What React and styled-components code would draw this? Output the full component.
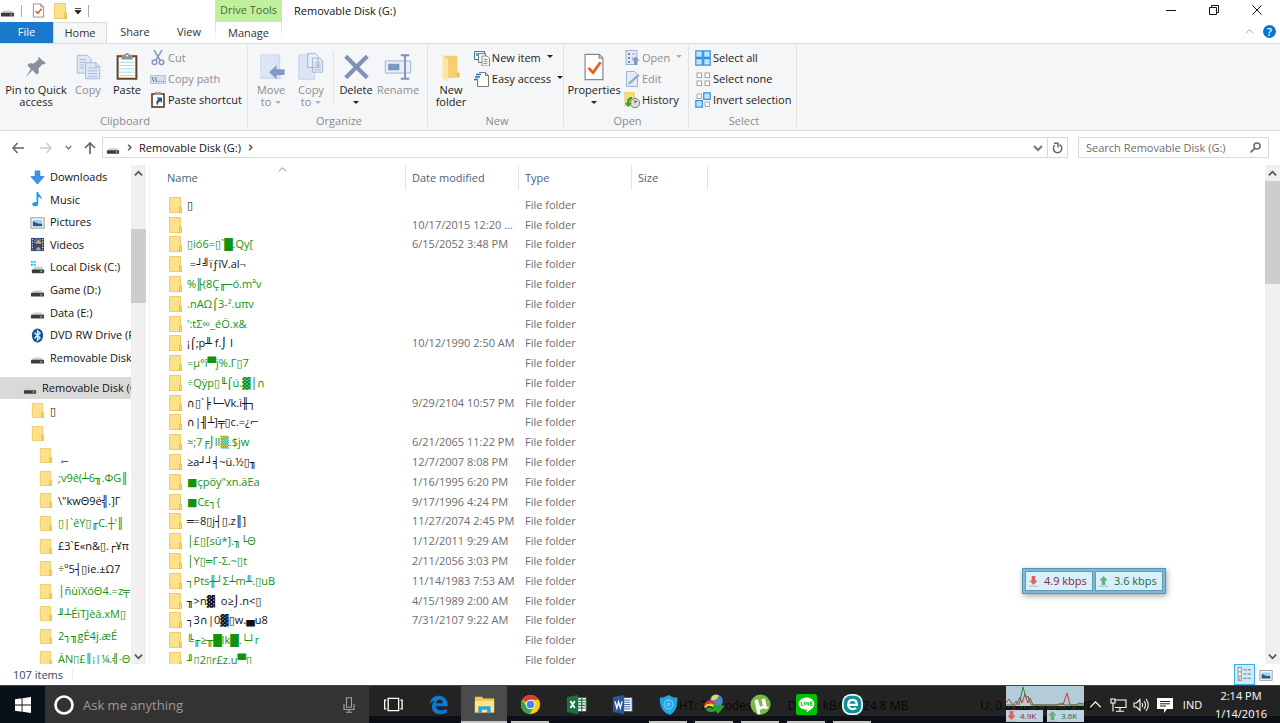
import styled, { createGlobalStyle } from 'styled-components'

const files = [
  ['▯', ''],
  ['', '10/17/2015 12:20 ...'],
  ['▯ió6=▯`█.Qy[', '6/15/2052 3:48 PM', 1],
  [' =┘╝ïƒîV.al¬', ''],
  ['%╟(8Ç╓─ó.mªv', '', 1],
  ['.nAΩ⌠3-².uπv', '', 1],
  ["':tΣ∞_éÖ.x&", '', 1],
  ['¡⌠;p╨ f.⌡ I', '10/12/1990 2:50 AM'],
  ['=µ°î▀j%.Γ▯7', '', 1],
  ['÷Qÿp▯╙⌠ú.▓│∩', '', 1],
  ['∩▯`╞└─Vk.ì╫┐', '9/29/2104 10:57 PM'],
  ['∩|╢┴]╤▯c.=¿⌐', ''],
  ['≈;7╒⌡ll▒.$jw', '6/21/2065 11:22 PM', 1],
  ['≥a┘┘╡~ü.½▯╖', '12/7/2007 8:08 PM'],
  ['■çpöy"xn.äEa', '1/16/1995 6:20 PM', 1],
  ['■Cε┐{', '9/17/1996 4:24 PM', 1],
  ['═=8▯j┤▯.z║]', '11/27/2074 2:45 PM'],
  ['│£▯[sû*].╖└Θ', '1/12/2011 9:29 AM', 1],
  ['│Y▯═Γ-Σ.~▯t', '2/11/2056 3:03 PM', 1],
  ['┐Pts╫┘Σ┴m╨.▯uB', '11/14/1983 7:53 AM', 1],
  ['╖>n▓  o≥⌡.n<▯', '4/15/1989 2:00 AM'],
  ['┐3∩|0▓▯w.▄u8', '7/31/2107 9:22 AM'],
  ['╚╓≥╥█lk█.└┘r', '', 1],
  ['╜▯2▯r£z.u▀▯', '', 1],
]

const places = [
  ['download', 'Downloads'],
  ['music', 'Music'],
  ['picture', 'Pictures'],
  ['video', 'Videos'],
  ['windrive', 'Local Disk (C:)'],
  ['drive', 'Game (D:)'],
  ['drive', 'Data (E:)'],
  ['bluetooth', 'DVD RW Drive (F:)'],
  ['drive', 'Removable Disk'],
]

const branches = [
  ['▯', 30],
  ['', 30],
  [' ¸_', 38],
  [';v9ê(┴6╖.ΦG║', 38, 1],
  ['\\"kwΘ9ë╣.]Γ', 38],
  ['▯|`êY▯╓C.┼\'║', 38, 1],
  ['£3`E«n&▯.┌¥π', 38],
  ['÷º5┤▯ie.±Ω7', 38],
  ['│ñùïXóΘ4.=z╤', 38, 1],
  ['╜┴ÉïTJèâ.xM▯', 38, 1],
  ['2┐╖gÉ4j.æÉ', 38, 1],
  ['ÄN▯£║¡|¼.╣·Θ', 38, 1],
]

const icons = {
  drive: (
    <>
      <path d="M4 8h8l3 3H1z" fill="#d2d2d2" />
      <rect x="1" y="10.500" width="14" height="4" rx="1" fill="#3c3c3c" />
      <rect x="11" y="11.500" width="2" height="2" fill="#3fd43f" />
    </>
  ),
  windrive: (
    <>
      <path d="M1 1h2v2H1zM4 1h2v2H4zM1 4h2v2H1zM4 4h2v2H4z" fill="#1cb4ee" />
      <path d="M5 7h8l2 4H2z" fill="#d2d2d2" />
      <rect x="2" y="10" width="13" height="4" rx="1" fill="#3c3c3c" />
      <rect x="11" y="11" width="2" height="2" fill="#3fd43f" />
    </>
  ),
  folder: (
    <>
      <path d="M2.500.500h11V12l1 3.500h-12z" fill="#fde08a" stroke="#eecb68" strokeWidth="1" />
      <path d="M12.500 10h2v5.500h-2z" fill="#fbd768" stroke="#dfb94e" strokeWidth=".8" />
    </>
  ),
  download: (
    <path d="M5.500 1h5v6H15l-7 8-7-8h4.500z" fill="#3c94e3" stroke="#2478c5" strokeWidth=".8" />
  ),
  music: (
    <>
      <ellipse cx="5.500" cy="13" rx="3" ry="2.300" fill="#1a9df0" />
      <path d="M7 0h1.800c0 3 4.200 4 3.700 8.500-.8-2.200-2-3-3.700-3.200V13H7z" fill="#1a9df0" />
    </>
  ),
  picture: (
    <>
      <rect x="1" y="3" width="14" height="11" fill="#fff" stroke="#8d8d8d" />
      <path d="M3 5h10v7H3z" fill="#9fd0f3" />
      <path d="M3 7c3 0 4 3 10 2v3H3z" fill="#2c5c7b" />
    </>
  ),
  video: (
    <>
      <path d="M1 1h14v14H1z" fill="#37393d" />
      <path d="M4 1.500h8v6H4z" fill="#3d72c9" />
      <path d="M4 8.500h8v6H4z" fill="#2d4f9b" />
      <path d="M6 7l3-4 3 3v1.500zM6 14l3-4 3 4z" fill="#e5a336" />
      <path d="M2.500 2v12M13.500 2v12" stroke="#e5e5e5" strokeWidth="1.300" strokeDasharray="1.500 1.300" />
    </>
  ),
  bluetooth: (
    <>
      <ellipse cx="8" cy="8" rx="6" ry="7.500" fill="#13539f" />
      <path d="M4.800 5l6 5.500L8 13V3l2.800 2.500-6 5.500" fill="none" stroke="#fff" strokeWidth="1.300" />
    </>
  ),
  check: (
    <>
      <path d="M2.500 1h8l3 3v11h-11z" fill="#fff" stroke="#8b8b8b" />
      <path d="M10.500 1v3h3" fill="none" stroke="#8b8b8b" />
      <path d="M5 8.500L7.300 11l4-5" fill="none" stroke="#f0561d" strokeWidth="1.600" />
    </>
  ),
  cut: (
    <g fill="none" stroke="#8799b8" strokeWidth="1.500">
      <path d="M4 0l6 10M12 0L6 10" />
      <circle cx="4.500" cy="12.300" r="2.300" />
      <circle cx="11.500" cy="12.300" r="2.300" />
    </g>
  ),
  path: (
    <>
      <rect x=".5" y="4.500" width="15" height="8" fill="#d2def0" stroke="#b4c5e0" />
      <path d="M2 6l2 5M5 6l2 5M8.500 10.500h1M11 10.500h1M13 10.500h1" stroke="#5873a0" fill="none" />
    </>
  ),
  shortcut: (
    <>
      <rect x="2" y="2" width="12" height="13" fill="#fff" stroke="#65452e" strokeWidth="1.700" />
      <rect x="5" y="0" width="6" height="3" fill="#9b9b9b" />
      <path d="M6.500 5.500H12V11l-1.800-1.800C8.300 10.500 7.500 11.500 7.500 13.500 5.500 11.500 6.300 8.800 8.300 7.300z" fill="#20589b" />
    </>
  ),
  newitem: (
    <>
      <path d="M.5 1.500h10v8H.5z" fill="#fff" stroke="#317eb2" />
      <path d="M2 3h7v3H2z" fill="#68a9cf" />
      <path d="M4.500 3.500h7v9h-7z" fill="#f7f7f7" stroke="#777" />
      <path d="M8 6h5l2.500 2.500V16H8z" fill="#fff" stroke="#888" />
      <path d="M9.500 9.500h4M9.500 11.500h4M9.500 13.500h4" stroke="#7c9fd0" />
      <path d="M11.500 8v7" stroke="#df8c8c" strokeWidth=".6" />
    </>
  ),
  easy: (
    <>
      <path d="M5 1.500h6.500l3 3v11H3.500V9" fill="#fff" stroke="#777" />
      <path d="M11.500 1.500v3h3" fill="none" stroke="#777" />
      <path d="M2 3.500h5M1 6h5M0 8.500h4" stroke="#2672b5" strokeWidth="1.300" />
    </>
  ),
  open: (
    <>
      <rect x="2" y=".5" width="11" height="14" fill="#e3eaf6" stroke="#a1b2d1" />
      <path d="M4 3h2v2H4zM4 7h2v2H4zM4 11h2v2H4z" fill="#7389b5" />
      <path d="M8 4h3M8 8h2" stroke="#8ea2c7" />
      <path d="M11.500 6.500l4 4h-2.300V15H10v-4.500H7.700z" fill="#8598c0" />
    </>
  ),
  edit: (
    <>
      <path d="M2.500.5h8l3 3v12h-11z" fill="#e3ebf8" stroke="#a1b2d1" />
      <path d="M4 14l1-3 9-8 1.500 1.700-9 8z" fill="#94a9ce" />
    </>
  ),
  history: (
    <>
      <path d="M1 0h9l1 14H1z" fill="#fbdc6f" stroke="#dfb94e" strokeWidth=".7" />
      <circle cx="11" cy="11" r="4.700" fill="#ddd" stroke="#777" />
      <path d="M11 8v3l2-2" stroke="#555" fill="none" />
      <path d="M8 5v2c-2 .5-2.600 2-2.600 4H8l-4 4-3-4h2c0-4 1.500-6 5-6z" fill="#20b22c" />
    </>
  ),
  all: (
    <g fill="#bfe4fc" stroke="#2a93e0" strokeWidth="1.200">
      <path d="M.8.8h6.500v6.500H.8zM8.700.8h6.500v6.500H8.700zM.8 8.700h6.500v6.500H.8zM8.700 8.700h6.500v6.500H8.700z" />
    </g>
  ),
  none: (
    <g fill="#fff" stroke="#a6a6a6" strokeWidth="1.100">
      <path d="M2 2h4.500v4.500H2zM10 2h4.500v4.500H10zM2 10h4.500v4.500H2zM10 10h4.500v4.500H10z" />
    </g>
  ),
  invert: (
    <>
      <path d="M2 2h4.500v4.500H2zM10 10h4.500v4.500H10z" fill="#fff" stroke="#a6a6a6" />
      <path d="M8.700.8h6.500v6.500H8.700zM.8 8.700h6.500v6.500H.8z" fill="#bfe4fc" stroke="#2a93e0" strokeWidth="1.200" />
    </>
  ),
  details: (
    <>
      <path d="M2 1.500h3v12H2zM2 5.500h3M2 9.500h3" fill="#fff" stroke="#9a9a9a" />
      <path d="M7 3.500h3M11 3.500h3M7 7.500h3M11 7.500h3M7 11.500h3M11 11.500h3" stroke="#6c7f8c" />
      <path d="M3 11h1v2H3z" fill="#d66" />
    </>
  ),
}

function Icon({ name, size = 16 }) {
  return (
    <svg width={size} height={size} viewBox="0 0 16 16" aria-hidden="true">
      {icons[name]}
    </svg>
  )
}

function Chevron({ dir = 'down', color = '#555', size = 9, weight = 2 }) {
  const d = {
    down: 'M1 3l4 4 4-4',
    up: 'M1 7l4-4 4 4',
    right: 'M3 1l4 4-4 4',
  }[dir]
  return (
    <svg width={size} height={size} viewBox="0 0 10 10" aria-hidden="true">
      <path d={d} fill="none" stroke={color} strokeWidth={weight} />
    </svg>
  )
}

const bigIcons = {
  pin: <path d="M18.500 5l8 7-2.300 1.300-1-.4-4.500 4.500.4 5-2.500 1.600-4.300-4.600L5 27l5.500-9L6.700 14l2-2 5 .3 4.800-4.300z" fill="#87919c" />,
  copy: (
    <g fill="#dfe8f5" stroke="#a6b8d6">
      <path d="M4.500 3.500h11l4 4v15h-15z" />
      <path d="M7 8h7M7 11h8M7 14h5M7 17h5" />
      <path d="M13.500 11.500h11l4 4v13h-15zM24.500 11.500v4h4" />
      <path d="M16 17h10M16 20h10M16 23h10M16 26h10" />
    </g>
  ),
  paste: (
    <>
      <rect x="6" y="4.500" width="20" height="24" fill="#fff" stroke="#65452e" strokeWidth="2.200" />
      <path d="M8 11h16M8 14.500h16M8 18h16M8 21.500h16M8 25h16" stroke="#a9d2ea" />
      <path d="M10 3h3.500a2.600 2.600 0 015 0H22v5H10z" fill="#8e9193" />
      <circle cx="16" cy="4" r="1" fill="#fff" />
    </>
  ),
  move: (
    <>
      <path d="M5 3h21v22l2 4H5z" fill="#dce5f3" />
      <path d="M5 3h20v25H5z" fill="none" stroke="#c2d0e7" strokeWidth=".7" />
      <path d="M14 21.500l8-7.500v4.500h8.500v6H22V29z" fill="#8499bf" />
    </>
  ),
  copyto: (
    <>
      <path d="M3 3h17v26H3z" fill="#dce5f3" stroke="#c2d0e7" />
      <g fill="#e8eef8" stroke="#9eb1d1">
        <path d="M12.500 1.500h8l3 3v12h-11zM17.500 6.500h8l3 3v12h-11z" />
        <path d="M19.500 11.500h7M19.500 14h7M19.500 16.500h7M19.500 19h7" />
      </g>
    </>
  ),
  delete: <path d="M5 4.500l23 23M28 4.500l-23 23" stroke="#8092b5" strokeWidth="4.500" fill="none" />,
  rename: (
    <>
      <path d="M2.500 9.500h27v13h-27z" fill="#e8eff9" stroke="#9eb1d1" />
      <path d="M5.500 12.500h12v7h-12z" fill="#7f96c2" />
      <path d="M19 3.500h4.500v25H19M28 3.500h-4.500v25H28" fill="none" stroke="#8094b9" strokeWidth="2" />
    </>
  ),
  newfolder: (
    <>
      <path d="M7 4h16v19h2v4l-14 1z" fill="#f4cf6c" />
      <path d="M7 3l6 5v20l-1.500 3L7 28z" fill="#fde59c" />
      <path d="M22 22h3v5h-3z" fill="#f0c04f" />
    </>
  ),
  properties: (
    <>
      <path d="M6.500 2.500h15l4 4v23h-19z" fill="#fff" stroke="#888" strokeWidth="1.300" />
      <path d="M21.500 2.500v4h4" fill="none" stroke="#888" strokeWidth="1.300" />
      <path d="M10 17l5 5 8-11" fill="none" stroke="#ee5a1c" strokeWidth="2.800" />
    </>
  ),
}

function Big({ icon, width, lines, off, arrow }) {
  return (
    <BigButton $width={width} $off={off}>
      <svg width="30" height="30" viewBox="0 0 32 32" aria-hidden="true">
        {bigIcons[icon]}
      </svg>
      {lines.map((line, i) => (
        <span key={line}>
          {line}
          {arrow && i > 0 && <Caret $off={off} />}
        </span>
      ))}
      {arrow && lines.length === 1 && (
        <span>
          <Caret $off={off} $alone />
        </span>
      )}
    </BigButton>
  )
}

function Small({ icon, children, off, arrow }) {
  return (
    <SmallButton $off={off}>
      <Icon name={icon} />
      {children}
      {arrow && <Caret $off={off} />}
    </SmallButton>
  )
}

function Ribbon() {
  return (
    <RibbonBar>
      <Group $width={248}>
        <Tools>
          <Big icon="pin" width={66} lines={['Pin to Quick', 'access']} />
          <Big icon="copy" width={38} lines={['Copy']} off />
          <Big icon="paste" width={40} lines={['Paste']} />
          <SmallColumn>
            <Small icon="cut" off>Cut</Small>
            <Small icon="path" off>Copy path</Small>
            <Small icon="shortcut">Paste shortcut</Small>
          </SmallColumn>
        </Tools>
        <GroupName>Clipboard</GroupName>
      </Group>
      <Group $width={180}>
        <Tools>
          <Big icon="move" width={40} lines={['Move', 'to']} off arrow />
          <Big icon="copyto" width={40} lines={['Copy', 'to']} off arrow />
          <ToolRule />
          <Big icon="delete" width={40} lines={['Delete']} arrow />
          <Big icon="rename" width={44} lines={['Rename']} off />
        </Tools>
        <GroupName>Organize</GroupName>
      </Group>
      <Group $width={136}>
        <Tools>
          <Big icon="newfolder" width={40} lines={['New', 'folder']} />
          <SmallColumn>
            <Small icon="newitem" arrow>New item</Small>
            <Small icon="easy" arrow>Easy access</Small>
          </SmallColumn>
        </Tools>
        <GroupName>New</GroupName>
      </Group>
      <Group $width={125}>
        <Tools>
          <Big icon="properties" width={54} lines={['Properties']} arrow />
          <SmallColumn>
            <Small icon="open" off arrow>Open</Small>
            <Small icon="edit" off>Edit</Small>
            <Small icon="history">History</Small>
          </SmallColumn>
        </Tools>
        <GroupName>Open</GroupName>
      </Group>
      <Group $width={108}>
        <Tools>
          <SmallColumn>
            <Small icon="all">Select all</Small>
            <Small icon="none">Select none</Small>
            <Small icon="invert">Invert selection</Small>
          </SmallColumn>
        </Tools>
        <GroupName>Select</GroupName>
      </Group>
    </RibbonBar>
  )
}

function ScrollBar({ before, thumb, after }) {
  return (
    <Track>
      <ScrollButton aria-label="Scroll up">
        <Chevron dir="up" />
      </ScrollButton>
      <Rail $before={before} $thumb={thumb} $after={after}>
        <i />
        <Thumb />
        <i />
      </Rail>
      <ScrollButton aria-label="Scroll down">
        <Chevron />
      </ScrollButton>
    </Track>
  )
}

const apps = [
  {
    name: 'Task View',
    art: <path d="M7 5h12v14H7zM5 7H3v10h2M21 7h2v10h-2" fill="none" stroke="#fff" strokeWidth="1.500" />,
  },
  {
    name: 'Edge',
    art: <path d="M2 11.500C3 5 7 2 12.500 2 19 2 23 7 22.600 14H9c.3 3 2.500 4.500 6 4.500 2.500 0 4.500-.6 6.500-1.700v4.400c-2 1.200-4.500 1.800-7.500 1.800-6 0-9.500-3.500-9.500-8.500 0-3 1.600-5.600 4.300-7C6 8 4 9 2 11.500zM9.200 10.500h7.600c0-2.500-1.300-3.800-3.600-3.800-2.200 0-3.600 1.400-4 3.800z" fill="#0b79d8" />,
  },
  {
    name: 'File Explorer',
    state: 'active',
    art: (
      <>
        <path d="M1 3h8l2 2h12v16H1z" fill="#f5c84b" />
        <path d="M1 8h22v13H1z" fill="#fde38f" />
        <path d="M5 14h14v8h-4v-4H9v4H5z" fill="#2ba5df" />
      </>
    ),
  },
  {
    name: 'Chrome',
    state: 'open',
    art: (
      <>
        <circle cx="12" cy="12" r="11" fill="#fc0" />
        <path d="M12 12L2.500 6.500A11 11 0 0121.500 6.500H12z" fill="#e33b2e" />
        <path d="M2.500 6.500A11 11 0 0011 23l5-8.500-8.500-.5z" fill="#37a34a" />
        <circle cx="12" cy="12" r="5.500" fill="#fff" />
        <circle cx="12" cy="12" r="4.300" fill="#4484ee" />
      </>
    ),
  },
  {
    name: 'Excel',
    art: (
      <>
        <path d="M13 4h10v16H13z" fill="#fff" stroke="#1e7044" strokeWidth="1" />
        <path d="M14 7h8M14 10h8M14 13h8M14 16h8M18 4v16" stroke="#1e7044" strokeWidth="1.300" />
        <path d="M1 3.500L14 1v22L1 20.500z" fill="#1e7044" />
        <path d="M5 8l5 8M10 8l-5 8" stroke="#fff" strokeWidth="2" />
      </>
    ),
  },
  {
    name: 'Word',
    art: (
      <>
        <path d="M13 4h10v16H13z" fill="#fff" stroke="#2b579a" strokeWidth="1" />
        <path d="M14 7h7M14 9.500h7M14 12h7M14 14.500h7M14 17h7" stroke="#2b579a" />
        <path d="M1 3.500L14 1v22L1 20.500z" fill="#2b579a" />
        <path d="M3.500 8.500L5.500 16l2-7 2 7 2-7.500" fill="none" stroke="#fff" strokeWidth="1.500" />
      </>
    ),
  },
  {
    name: 'Shield',
    state: 'open',
    art: (
      <>
        <path d="M12 1c4 2.500 7 3 10 3 .5 10-1 15-8 20C6 22 1.500 14 2 4c3 0 6-.5 10-3z" fill="#21a5e6" />
        <circle cx="12" cy="12" r="5" fill="none" stroke="#80cff4" strokeWidth="1.200" />
        <circle cx="12" cy="12" r="1.500" fill="none" stroke="#b8e5fa" />
      </>
    ),
  },
  {
    name: 'Download Manager',
    state: 'open',
    art: (
      <>
        <circle cx="14" cy="8" r="7.500" fill="#4a87c9" />
        <path d="M9 3c2-2.500 6-2.500 8-1l-2 3-3 2-4 0z" fill="#e4d75a" />
        <path d="M0 14C1 6.500 8 6 13 10l-2 2C7 9.500 4 10 0 14z" fill="#df342d" />
        <path d="M0 15c3-5 8-5 12-2l-2 2c-3-2-6-2-8 1z" fill="#ffd324" />
        <path d="M2 18c2-3.500 6-3 8.500-1L11 12l13 1.500-8 9-2.500-3C9 21.500 5 21 2 18z" fill="#23a52d" />
      </>
    ),
  },
  {
    name: 'uTorrent',
    state: 'open',
    art: (
      <>
        <circle cx="12" cy="12" r="11.500" fill="#78b943" />
        <path d="M5 7l4-1 2 7c.6 2 4 1.500 3.400-1L13 6l4-.8 2.200 9.300 2-.2c-.5 2-2 3-3.700 3-1 0-1.500-.5-2-1.300-1 1.500-3 2-4.500 1.300L12 23l-3.500.5z" fill="#fff" />
      </>
    ),
  },
  {
    name: 'LINE',
    state: 'open',
    art: (
      <>
        <rect x="0" y="0" width="24" height="24" rx="3" fill="#00c300" />
        <path d="M12 4c5 0 9 3 9 7.500 0 4-4 6.500-9 9.500l.5-3C7 18 3 15.500 3 11.500S7 4 12 4z" fill="#fff" />
        <path d="M6 9v4h2M9.500 9v4M11.500 13V9l3 4V9M19 9h-2.500v4H19M16.500 11h2" fill="none" stroke="#00b300" strokeWidth="1" />
      </>
    ),
  },
  {
    name: 'Smadav',
    state: 'open',
    art: (
      <>
        <rect x="0" y="0" width="24" height="24" rx="10" fill="#eef8f9" />
        <rect x="2" y="2" width="20" height="20" rx="8" fill="#118f98" />
        <path d="M7 12.500h10c0-4-2-5.700-4.800-5.700-3 0-5 2.200-5 5.400 0 4.800 5 6.300 9 4" fill="none" stroke="#fff" strokeWidth="2.500" />
      </>
    ),
  },
]

function Taskbar() {
  return (
    <TaskRow>
      <Ghost>
        <span>DHT: 77 nodes</span>
        <span>D: 0.0 kB/s T: 24.8 MB</span>
        <span>U: 0.0 kB/s T: 2.0 MB</span>
      </Ghost>
      <StartButton aria-label="Start">
        <svg width="16" height="16" viewBox="0 0 16 16">
          <path d="M0 2.200L6.600 1.300v6.200H0zM7.500 1.200L16 0v7.500H7.500zM0 8.400h6.600v6.300L0 13.800zM7.500 8.400H16V16l-8.500-1.200z" fill="#fff" />
        </svg>
      </StartButton>
      <Cortana>
        <svg width="22" height="22" viewBox="0 0 22 22" aria-hidden="true">
          <circle cx="11" cy="11" r="8.500" fill="none" stroke="#fff" strokeWidth="2.600" />
        </svg>
        <CortanaInput aria-label="Ask me anything" placeholder="Ask me anything" />
        <svg width="12" height="16" viewBox="0 0 12 16" aria-hidden="true">
          <path d="M3.500.7h5v9.600h-5zM1 7v5.500h10V7M6 12.500V15M3 15.300h6" fill="none" stroke="#a2a2a2" strokeWidth="1.100" />
        </svg>
      </Cortana>
      <Apps>
        {apps.map((app) => (
          <AppButton key={app.name} aria-label={app.name} $state={app.state}>
            <svg width="21" height="21" viewBox="0 0 24 24">
              {app.art}
            </svg>
          </AppButton>
        ))}
      </Apps>
      <Tray>
        <NetMeter>
          <svg width="78" height="20" viewBox="0 0 78 20" aria-hidden="true">
            <path d="M0 17l3-4 4 6h3l4-8 2 6 3-9 3 9 2-5 3 7h24l2-1 4 1 4-12 3 12h6l3-2 5 1" fill="none" stroke="#c73a35" />
            <path d="M0 19h7l3-4 3 4 4-18 3 11 2-2 3 9h27l4-2 3 2h19" fill="none" stroke="#33834a" />
          </svg>
          <MeterRow>
            <Meter $color="#8c2540"><SpeedArrow />4.9K</Meter>
            <Meter $color="#1d6b3f"><SpeedArrow up />3.6K</Meter>
          </MeterRow>
        </NetMeter>
        <TrayButton aria-label="Show hidden icons">
          <Chevron dir="up" color="#fff" size={13} weight={1} />
        </TrayButton>
        <TrayButton aria-label="Network">
          <svg width="17" height="16" viewBox="0 0 17 16">
            <path d="M5 3h11v7.500H5M10 10.500V14M6 14.300h8M1 2h4v4H1zM3 6v8.500" fill="none" stroke="#fff" strokeWidth="1.100" />
          </svg>
        </TrayButton>
        <TrayButton aria-label="Volume">
          <svg width="17" height="16" viewBox="0 0 17 16">
            <path d="M1 6h2.500L7 2.500v11L3.500 10H1zM9 6q1.300 2 0 4M11 4q3 4 0 8M13 2q4.500 6 0 12" fill="none" stroke="#fff" strokeWidth="1.100" />
          </svg>
        </TrayButton>
        <TrayButton aria-label="Notifications">
          <svg width="16" height="16" viewBox="0 0 16 16">
            <path d="M0 1h16v11h-6l-3 4v-4H0z" fill="#fff" />
            <path d="M3 4.500h10M3 6.800h10M3 9h6" stroke="#222" />
          </svg>
        </TrayButton>
        <Language>IND</Language>
        <Clock>
          <span>2:14 PM</span>
          <span>1/14/2016</span>
        </Clock>
      </Tray>
    </TaskRow>
  )
}

function SpeedArrow({ up }) {
  return (
    <svg width="9" height="11" viewBox="0 0 10 12" aria-hidden="true">
      {up ? (
        <path d="M5 0l4.500 5H7v5H3V5H.5z" fill="#64b078" />
      ) : (
        <path d="M3 0h4v5h2.500L5 10 .5 5H3z" fill="#e0605c" />
      )}
      <path d="M0 11.300h10" stroke="#9fb5bd" />
    </svg>
  )
}

export default function App() {
  return (
    <Page>
      <Global />
      <Top>
        <Quick>
          <TitleRow>
            <Icon name="drive" size={15} />
            <QuickRule />
            <IconButton aria-label="Properties"><Icon name="check" size={15} /></IconButton>
            <IconButton aria-label="New folder"><Icon name="folder" /></IconButton>
            <IconButton aria-label="Customize toolbar">
              <svg width="8" height="8" viewBox="0 0 8 8">
                <path d="M1 1.500h6M1 3.500h6L4 7z" stroke="#222" fill="#222" strokeWidth=".8" />
              </svg>
            </IconButton>
            <QuickRule />
          </TitleRow>
          <Tabs>
            <FileTab>File</FileTab>
            <Tab $width={54} $active>Home</Tab>
            <Tab $width={56}>Share</Tab>
            <Tab $width={52}>View</Tab>
          </Tabs>
        </Quick>
        <DriveTools>
          <DriveLabel>Drive Tools</DriveLabel>
          <ManageTab>Manage</ManageTab>
        </DriveTools>
        <Title>Removable Disk (G:)</Title>
        <WindowSide>
          <WindowButtons>
            <IconButton aria-label="Minimize">
              <svg width="10" height="10" viewBox="0 0 10 10"><path d="M0 5.500h10" stroke="#111" /></svg>
            </IconButton>
            <IconButton aria-label="Restore">
              <svg width="10" height="10" viewBox="0 0 10 10"><path d="M.5 2.500h7v7h-7zM2.500 2.500v-2h7v7h-2" fill="none" stroke="#111" /></svg>
            </IconButton>
            <IconButton aria-label="Close">
              <svg width="10" height="10" viewBox="0 0 10 10"><path d="M.5.5l9 9M9.500.5l-9 9" stroke="#111" /></svg>
            </IconButton>
          </WindowButtons>
          <HelpRow>
            <IconButton aria-label="Collapse ribbon"><Chevron dir="up" color="#999" weight={1} /></IconButton>
            <Help>?</Help>
          </HelpRow>
        </WindowSide>
      </Top>

      <Ribbon />

      <Navigation>
        <Arrows>
          <IconButton aria-label="Back">
            <svg width="12" height="12" viewBox="0 0 12 12"><path d="M12 6H1M5.500 1L1 6l4.500 5" fill="none" stroke="#666" strokeWidth="1.500" /></svg>
          </IconButton>
          <IconButton aria-label="Forward">
            <svg width="12" height="12" viewBox="0 0 12 12"><path d="M0 6h11M6.500 1L11 6l-4.500 5" fill="none" stroke="#ccc" strokeWidth="1.300" /></svg>
          </IconButton>
          <IconButton aria-label="Recent locations"><Chevron size={7} color="#777" /></IconButton>
          <IconButton aria-label="Up">
            <svg width="12" height="12" viewBox="0 0 12 12"><path d="M6 12V1M1 6l5-5 5 5" fill="none" stroke="#666" strokeWidth="1.700" /></svg>
          </IconButton>
        </Arrows>
        <Address>
          <Icon name="drive" size={14} />
          <Chevron dir="right" size={7} />
          <Crumb>Removable Disk (G:)</Crumb>
          <Chevron dir="right" size={7} />
          <AddressEnd>
            <IconButton aria-label="Previous locations"><Chevron size={10} color="#777" /></IconButton>
            <Refresh aria-label="Refresh">
              <svg width="11" height="12" viewBox="0 0 11 12"><path d="M7.500 2.700a4.200 4.200 0 11-4.700.6M2 1.200h4V5.500" fill="none" stroke="#666" strokeWidth="1.500" /></svg>
            </Refresh>
          </AddressEnd>
        </Address>
        <Search>
          <SearchInput aria-label="Search Removable Disk (G:)" placeholder="Search Removable Disk (G:)" />
          <svg width="11" height="11" viewBox="0 0 11 11" aria-hidden="true">
            <circle cx="7" cy="4" r="3" fill="none" stroke="#666" strokeWidth="1.500" />
            <path d="M5 6L.7 10.300" stroke="#666" strokeWidth="1.700" />
          </svg>
        </Search>
      </Navigation>

      <Main>
        <Tree>
          <TreeList>
            {places.map(([icon, label]) => (
              <TreeItem key={label} $indent={30}>
                <Icon name={icon} size={15} />
                {label}
              </TreeItem>
            ))}
            <TreeItem $indent={23} $selected>
              <Icon name="drive" size={14} />
              Removable Disk (G:)
            </TreeItem>
            {branches.map(([label, indent, green], i) => (
              <TreeItem key={i} $indent={indent} $green={green}>
                <Icon name="folder" size={15} />
                {label}
              </TreeItem>
            ))}
          </TreeList>
          <ScrollBar before={48} thumb={74} after={345} />
        </Tree>
        <Files>
          <FileTable>
            <colgroup>
              <col width="256" />
              <col width="113" />
              <col width="113" />
              <col width="76" />
              <col />
            </colgroup>
            <thead>
              <tr>
                <Head>
                  <div>Name</div>
                  <SortMark><Chevron dir="up" color="#777" weight={1} /></SortMark>
                </Head>
                <Head><div>Date modified</div></Head>
                <Head><div>Type</div></Head>
                <Head><div>Size</div></Head>
                <td />
              </tr>
            </thead>
            <tbody>
              {files.map(([name, date, green], i) => (
                <tr key={i}>
                  <Cell>
                    <FileName $green={green}>
                      <Icon name="folder" />
                      {name}
                    </FileName>
                  </Cell>
                  <Cell>{date}</Cell>
                  <Cell>File folder</Cell>
                  <Cell />
                  <td />
                </tr>
              ))}
            </tbody>
          </FileTable>
        </Files>
        <ScrollBar before={0} thumb={103} after={366} />
      </Main>

      <Status>
        <StatusCount>107 items</StatusCount>
        <ViewButton aria-label="Details view" $on><Icon name="details" size={17} /></ViewButton>
        <ViewButton aria-label="Thumbnail view"><Icon name="picture" size={14} /></ViewButton>
      </Status>

      <Taskbar />

      <SpeedWidget>
        <Speed $color="#8a1f2b"><SpeedArrow />4.9 kbps</Speed>
        <Speed $color="#256b35"><SpeedArrow up />3.6 kbps</Speed>
      </SpeedWidget>
    </Page>
  )
}

const Global = createGlobalStyle`
  * {
    box-sizing: border-box;
  }
  body {
    margin: 0;
    overflow: hidden;
  }
  body, button, input {
    font-family: 'Open Sans', 'DejaVu Sans', sans-serif;
    font-size: 11px;
    line-height: 16px;
    color: #1a1a1a;
  }
  button {
    padding: 0;
    border: 0;
    background: none;
  }
  svg {
    flex: none;
    display: block;
  }
`

const Page = styled.div`
  position: relative;
  height: 100vh;
  display: flex;
  flex-direction: column;
  background: #fff;
`

const Top = styled.header`
  display: flex;
  height: 44px;
  border-bottom: 1px solid #dadbdc;
`

const Quick = styled.div`
  display: flex;
  flex-direction: column;
`

const TitleRow = styled.div`
  display: flex;
  align-items: center;
  gap: 6px;
  height: 22px;
`

const QuickRule = styled.span`
  width: 1px;
  height: 12px;
  margin: 0 3px 0 0;
  background: #aaa;
`

const IconButton = styled.button`
  display: flex;
  align-items: center;
  justify-content: center;
`

const Tabs = styled.nav`
  display: flex;
  height: 22px;
`

const FileTab = styled.button`
  width: 53px;
  height: 21px;
  background: #1979ca;
  color: #fff;
`

const Tab = styled.button`
  width: ${(props) => props.$width}px;
  color: #333;
  ${(props) =>
    props.$active &&
    `
    background: #f5f6f7;
    border: 1px solid #dadbdc;
    border-bottom: 0;
  `}
`

const DriveTools = styled.div`
  display: flex;
  flex-direction: column;
  width: 67px;
`

const DriveLabel = styled.div`
  height: 22px;
  line-height: 20px;
  text-align: center;
  background: #c0f09b;
  color: #4b6a3a;
`

const ManageTab = styled.button`
  flex: 1;
  border: 1px solid;
  border-width: 0 1px;
  border-image: linear-gradient(#c8e8b4, #fff) 1;
  color: #333;
`

const Title = styled.div`
  flex: 1;
  padding-left: 12px;
  line-height: 22px;
  color: #111;
`

const WindowSide = styled.div`
  display: flex;
  flex-direction: column;
`

const WindowButtons = styled.div`
  display: flex;
  height: 20px;
  padding-right: 2px;
  button {
    width: 43px;
  }
`

const HelpRow = styled.div`
  display: flex;
  align-items: center;
  justify-content: flex-end;
  gap: 9px;
  height: 24px;
  padding-right: 4px;
`

const Help = styled.button`
  width: 13px;
  height: 13px;
  line-height: 13px;
  border-radius: 50%;
  background: #0a74d0;
  color: #fff;
  font-weight: 600;
`

const RibbonBar = styled.section`
  display: flex;
  height: 87px;
  padding: 2px 0 3px;
  background: #f5f6f7;
  border-bottom: 1px solid #dadbdc;
`

const Group = styled.div`
  display: flex;
  flex: none;
  flex-direction: column;
  justify-content: space-between;
  width: ${(props) => props.$width}px;
  padding: 1px 0 0 3px;
  border-right: 1px solid #e1e2e3;
`

const Tools = styled.div`
  display: flex;
`

const GroupName = styled.div`
  line-height: 12px;
  text-align: center;
  color: #8a8a8a;
`

const BigButton = styled.button`
  display: flex;
  flex-direction: column;
  align-items: center;
  width: ${(props) => props.$width}px;
  padding-top: 5px;
  line-height: 12px;
  white-space: nowrap;
  color: ${(props) => (props.$off ? '#8d8d8d' : '#222')};
  svg {
    margin-bottom: 2px;
  }
`

const SmallColumn = styled.div`
  display: flex;
  flex-direction: column;
  padding-left: 3px;
`

const SmallButton = styled.button`
  display: flex;
  align-items: center;
  gap: 2px;
  height: 21px;
  white-space: nowrap;
  color: ${(props) => (props.$off ? '#8d8d8d' : '#222')};
`

const Caret = styled.i`
  display: inline-block;
  margin: 0 0 2px 4px;
  border: 3px solid transparent;
  border-top-color: ${(props) => (props.$off ? '#b0b0b0' : '#222')};
  border-bottom: 0;
  ${(props) => props.$alone && 'margin-left: 0;'}
`

const ToolRule = styled.span`
  width: 1px;
  height: 52px;
  margin: 4px 2px 0;
  background: #e1e2e3;
`

const Navigation = styled.div`
  display: flex;
  align-items: center;
  height: 34px;
  padding: 0 11px 1px 0;
`

const Arrows = styled.div`
  display: flex;
  align-items: center;
  gap: 12px;
  padding: 0 6px 0 12px;
  button:nth-child(2) {
    margin: 0 1px 0 4px;
  }
`

const Address = styled.div`
  display: flex;
  align-items: center;
  flex: 1;
  gap: 6px;
  height: 21px;
  padding-left: 3px;
  border: 1px solid #d9d9d9;
`

const Crumb = styled.button`
  color: #111;
`

const AddressEnd = styled.div`
  display: flex;
  align-self: stretch;
  gap: 4px;
  margin-left: auto;
`

const Refresh = styled(IconButton)`
  width: 20px;
  border-left: 1px solid #d9d9d9;
`

const Search = styled.div`
  display: flex;
  align-items: center;
  width: 191px;
  height: 21px;
  margin-left: 10px;
  padding: 0 7px;
  border: 1px solid #d9d9d9;
`

const SearchInput = styled.input`
  flex: 1;
  min-width: 0;
  padding: 0;
  border: 0;
  outline: 0;
  &::placeholder {
    color: #6d6d6d;
    opacity: 1;
  }
`

const Main = styled.main`
  display: flex;
  flex: 1;
  min-height: 0;
`

const Tree = styled.nav`
  display: flex;
  width: 150px;
  padding-right: 3px;
  overflow: hidden;
  border-right: 1px solid #f3f3f3;
`

const TreeList = styled.div`
  display: flex;
  flex: 1;
  flex-direction: column;
  min-width: 0;
  height: calc(100% + 6px);
  padding-top: 1px;
`

const TreeItem = styled.button`
  display: flex;
  flex: 1 1 0;
  align-items: center;
  gap: 5px;
  min-height: 0;
  margin-top: ${(props) => (props.$selected ? 8 : 0)}px;
  padding-left: ${(props) => props.$indent}px;
  overflow: hidden;
  white-space: pre;
  background: ${(props) => (props.$selected ? '#d9d9d9' : 'none')};
  color: ${(props) => (props.$green ? '#13920f' : '#111')};
`

const Track = styled.div`
  display: flex;
  flex-direction: column;
  width: 15px;
  background: #f0f0f0;
`

const ScrollButton = styled(IconButton)`
  height: 16px;
`

const Rail = styled.div`
  display: grid;
  flex: 1;
  grid-template-rows: ${(props) => `${props.$before}fr ${props.$thumb}fr ${props.$after}fr`};
`

const Thumb = styled.div`
  background: #cdcdcd;
`

const Files = styled.section`
  flex: 1;
  min-width: 0;
  overflow: hidden;
`

const FileTable = styled.table`
  width: 100%;
  height: calc(100% + 6px);
  table-layout: fixed;
  border-collapse: collapse;
  td, th {
    padding: 0;
  }
`

const Head = styled.th`
  position: relative;
  height: 30px;
  vertical-align: top;
  text-align: left;
  font-weight: 400;
  color: #4c607a;
  div {
    height: 25px;
    padding-left: 6px;
    line-height: 25px;
    border-right: 1px solid #e5e5e5;
  }
  &:first-child div {
    padding-left: 17px;
  }
`

const SortMark = styled.span`
  position: absolute;
  top: 0;
  left: 50%;
`

const Cell = styled.td`
  padding: 0 0 0 6px !important;
  overflow: hidden;
  text-overflow: ellipsis;
  white-space: nowrap;
  color: #6d6d6d;
`

const FileName = styled.div`
  display: flex;
  align-items: center;
  gap: 4px;
  height: 16px;
  padding-left: 11px;
  white-space: pre;
  color: ${(props) => (props.$green ? '#13920f' : '#111')};
`

const Status = styled.footer`
  display: flex;
  align-items: center;
  height: 21px;
  padding-right: 4px;
`

const StatusCount = styled.div`
  margin-right: auto;
  padding: 0 9px 0 13px;
  line-height: 12px;
  border-right: 1px solid #eee;
  color: #34455e;
`

const ViewButton = styled(IconButton)`
  width: 21px;
  height: 21px;
  border: 1px solid ${(props) => (props.$on ? '#3fb0e6' : 'transparent')};
  background: ${(props) => (props.$on ? '#cdeaf8' : 'none')};
`

const TaskRow = styled.footer`
  position: relative;
  display: flex;
  height: 38px;
  border-top: 1px solid #444;
  background: linear-gradient(#232323 30px, #0b0f17 30px);
`

const Ghost = styled.div`
  position: absolute;
  top: 12px;
  left: 670px;
  display: flex;
  gap: 36px;
  font-size: 12px;
  white-space: nowrap;
  color: #070707;
  span:last-child {
    margin-left: 36px;
  }
`

const StartButton = styled(IconButton)`
  width: 45px;
  background: #08111a;
`

const Cortana = styled.div`
  display: flex;
  align-items: center;
  gap: 8px;
  width: 324px;
  padding: 0 14px 0 8px;
  background: #333;
`

const CortanaInput = styled.input`
  flex: 1;
  min-width: 0;
  padding: 0;
  border: 0;
  outline: 0;
  background: none;
  font-size: 13px;
  &::placeholder {
    color: #9b9b9b;
    opacity: 1;
  }
`

const Apps = styled.div`
  position: relative;
  display: flex;
  flex: 1;
`

const AppButton = styled(IconButton)`
  position: relative;
  width: 46px;
  background: ${(props) => (props.$state === 'active' ? '#4b4b4b' : 'none')};
  &::after {
    content: '';
    position: absolute;
    right: ${(props) => (props.$state === 'active' ? 0 : 4)}px;
    bottom: 0;
    left: ${(props) => (props.$state === 'active' ? 0 : 4)}px;
    height: 2px;
    background: ${(props) => (props.$state ? '#c5c5c5' : 'none')};
  }
`

const Tray = styled.div`
  position: relative;
  display: flex;
  align-items: center;
  padding-right: 12px;
`

const NetMeter = styled.div`
  display: flex;
  flex-direction: column;
  justify-content: space-between;
  align-self: stretch;
  width: 78px;
  padding-bottom: 1px;
  > svg {
    background: #b4cbd8;
  }
`

const MeterRow = styled.div`
  display: flex;
  gap: 4px;
`

const Meter = styled.div`
  display: flex;
  flex: 1;
  align-items: center;
  gap: 4px;
  height: 12px;
  padding-left: 1px;
  background: #bdd3df;
  font-size: 8px;
  line-height: 12px;
  color: ${(props) => props.$color};
`

const TrayButton = styled(IconButton)`
  width: 23px;
`

const Language = styled.button`
  width: 33px;
  color: #fff;
`

const Clock = styled.div`
  display: flex;
  flex-direction: column;
  align-items: center;
  width: 54px;
  margin-left: 5px;
  line-height: 18px;
  color: #fff;
`

const SpeedWidget = styled.aside`
  position: absolute;
  right: 114px;
  bottom: 129px;
  display: flex;
  gap: 2px;
  padding: 2px;
  border: 1px solid #5793b3;
  background: #7dbad8;
  box-shadow: 1px 2px 6px rgba(0, 0, 0, 0.35);
`

const Speed = styled.div`
  display: flex;
  align-items: center;
  gap: 6px;
  width: 68px;
  height: 20px;
  padding-left: 3px;
  border: 1px solid #6299b5;
  background: #d8f0fb;
  white-space: nowrap;
  color: ${(props) => props.$color};
`
